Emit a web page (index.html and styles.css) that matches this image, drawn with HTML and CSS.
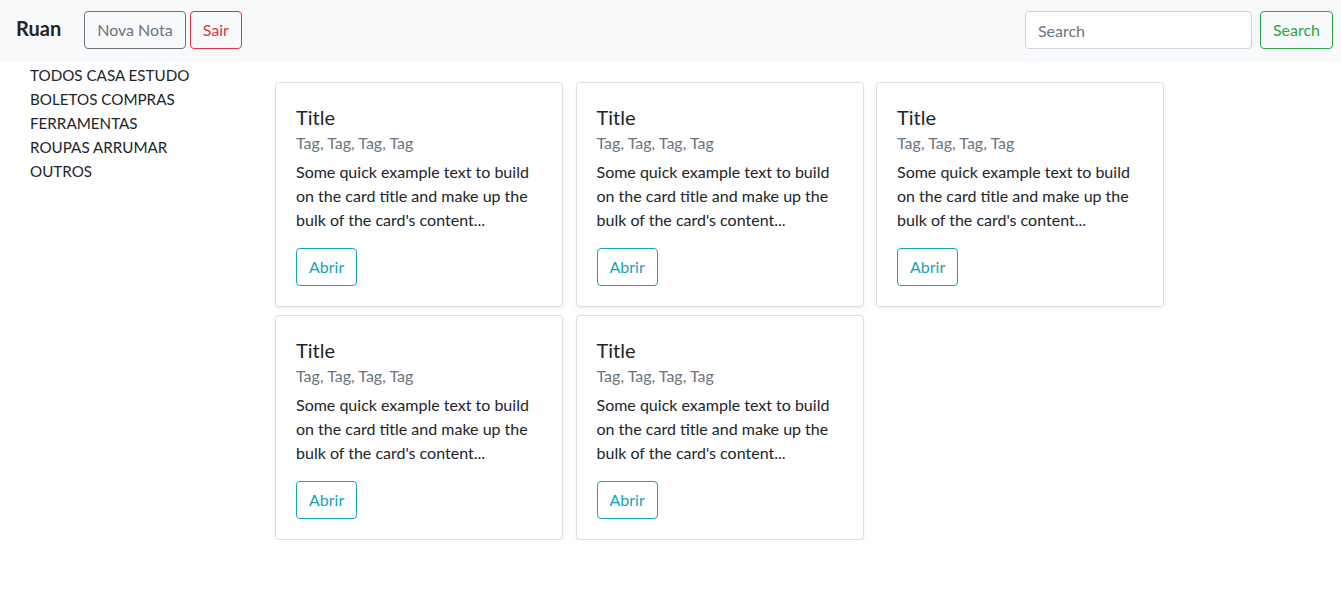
FILE: index.html
```html
<!DOCTYPE html>
<html lang="pt-BR">
<head>
<meta charset="UTF-8" />
<meta name="viewport" content="width=device-width, initial-scale=1" />
<title>Notas</title>
<link rel="stylesheet" href="styles.css">
</head>
<body>

<nav class="navbar">
  <span class="brand">Ruan</span>
  <button class="btn btn-secondary">Nova Nota</button>
  <button class="btn btn-danger">Sair</button>
  <form class="search">
    <input type="search" placeholder="Search" />
    <button type="submit" class="btn btn-success">Search</button>
  </form>
</nav>

<div class="layout">
  <ul class="categorias">
    <li>TODOS CASA ESTUDO</li>
    <li>BOLETOS COMPRAS</li>
    <li>FERRAMENTAS</li>
    <li>ROUPAS ARRUMAR</li>
    <li>OUTROS</li>
  </ul>

  <div class="notas">
    <div class="card">
      <h5 class="card-title">Title</h5>
      <h6 class="card-subtitle">Tag, Tag, Tag, Tag</h6>
      <p class="card-text">Some quick example text to build on the card title and make up the bulk of the card's content...</p>
      <button class="btn btn-info">Abrir</button>
    </div>
    <div class="card">
      <h5 class="card-title">Title</h5>
      <h6 class="card-subtitle">Tag, Tag, Tag, Tag</h6>
      <p class="card-text">Some quick example text to build on the card title and make up the bulk of the card's content...</p>
      <button class="btn btn-info">Abrir</button>
    </div>
    <div class="card">
      <h5 class="card-title">Title</h5>
      <h6 class="card-subtitle">Tag, Tag, Tag, Tag</h6>
      <p class="card-text">Some quick example text to build on the card title and make up the bulk of the card's content...</p>
      <button class="btn btn-info">Abrir</button>
    </div>
    <div class="card">
      <h5 class="card-title">Title</h5>
      <h6 class="card-subtitle">Tag, Tag, Tag, Tag</h6>
      <p class="card-text">Some quick example text to build on the card title and make up the bulk of the card's content...</p>
      <button class="btn btn-info">Abrir</button>
    </div>
    <div class="card">
      <h5 class="card-title">Title</h5>
      <h6 class="card-subtitle">Tag, Tag, Tag, Tag</h6>
      <p class="card-text">Some quick example text to build on the card title and make up the bulk of the card's content...</p>
      <button class="btn btn-info">Abrir</button>
    </div>
  </div>
</div>

</body>
</html>
```

FILE: styles.css
```css
body { margin: 0; font-family: Lato, "Liberation Sans", sans-serif; font-size: 16px; line-height: 1.5; color: #212529; background: #fff; }

.navbar { display: flex; align-items: flex-start; height: 62px; box-sizing: border-box; padding: 11px 8px 0 16px; background: #f8f9fa; }
.brand { font-size: 20px; font-weight: bold; margin-right: 23px; line-height: 34px; }
.navbar .btn + .btn { margin-left: 4px; }
.search { display: flex; margin-left: auto; }
.search input { width: 227px; height: 38px; box-sizing: border-box; padding: 6px 12px; font: inherit; color: #495057; border: 1px solid #ced4da; border-radius: 4px; margin-right: 8px; }
.search input::placeholder { color: #6c757d; }

.btn { font: inherit; line-height: 24px; padding: 6px 12px; background: transparent; border: 1px solid; border-radius: 4px; cursor: pointer; }
.btn-secondary { color: #6c757d; border-color: #6c757d; }
.btn-danger { color: #dc3545; border-color: #dc3545; }
.btn-success { color: #28a745; border-color: #28a745; }
.btn-info { color: #17a2b8; border-color: #17a2b8; }

.layout { display: flex; }
.categorias { list-style: none; margin: 0; padding: 1px 0 0 30px; width: 275px; box-sizing: border-box; font-size: 15.2px; line-height: 24px; }
.notas { display: grid; grid-template-columns: repeat(3, 288px); column-gap: 12.5px; row-gap: 8px; margin-top: 20px; align-content: start; }

.card { border: 1px solid rgba(0,0,0,.125); border-radius: 4px; padding: 20px; box-shadow: 0 .125rem .25rem rgba(0,0,0,.075); }
.card-title { margin: 0 0 10px; padding-top: 2px; font-size: 20px; font-weight: normal; line-height: 1.2; }
.card-subtitle { margin: -6px 0 8px; font-size: 16px; font-weight: normal; line-height: 1.2; color: #6c757d; }
.card-text { margin: 0 0 16px; }
```
